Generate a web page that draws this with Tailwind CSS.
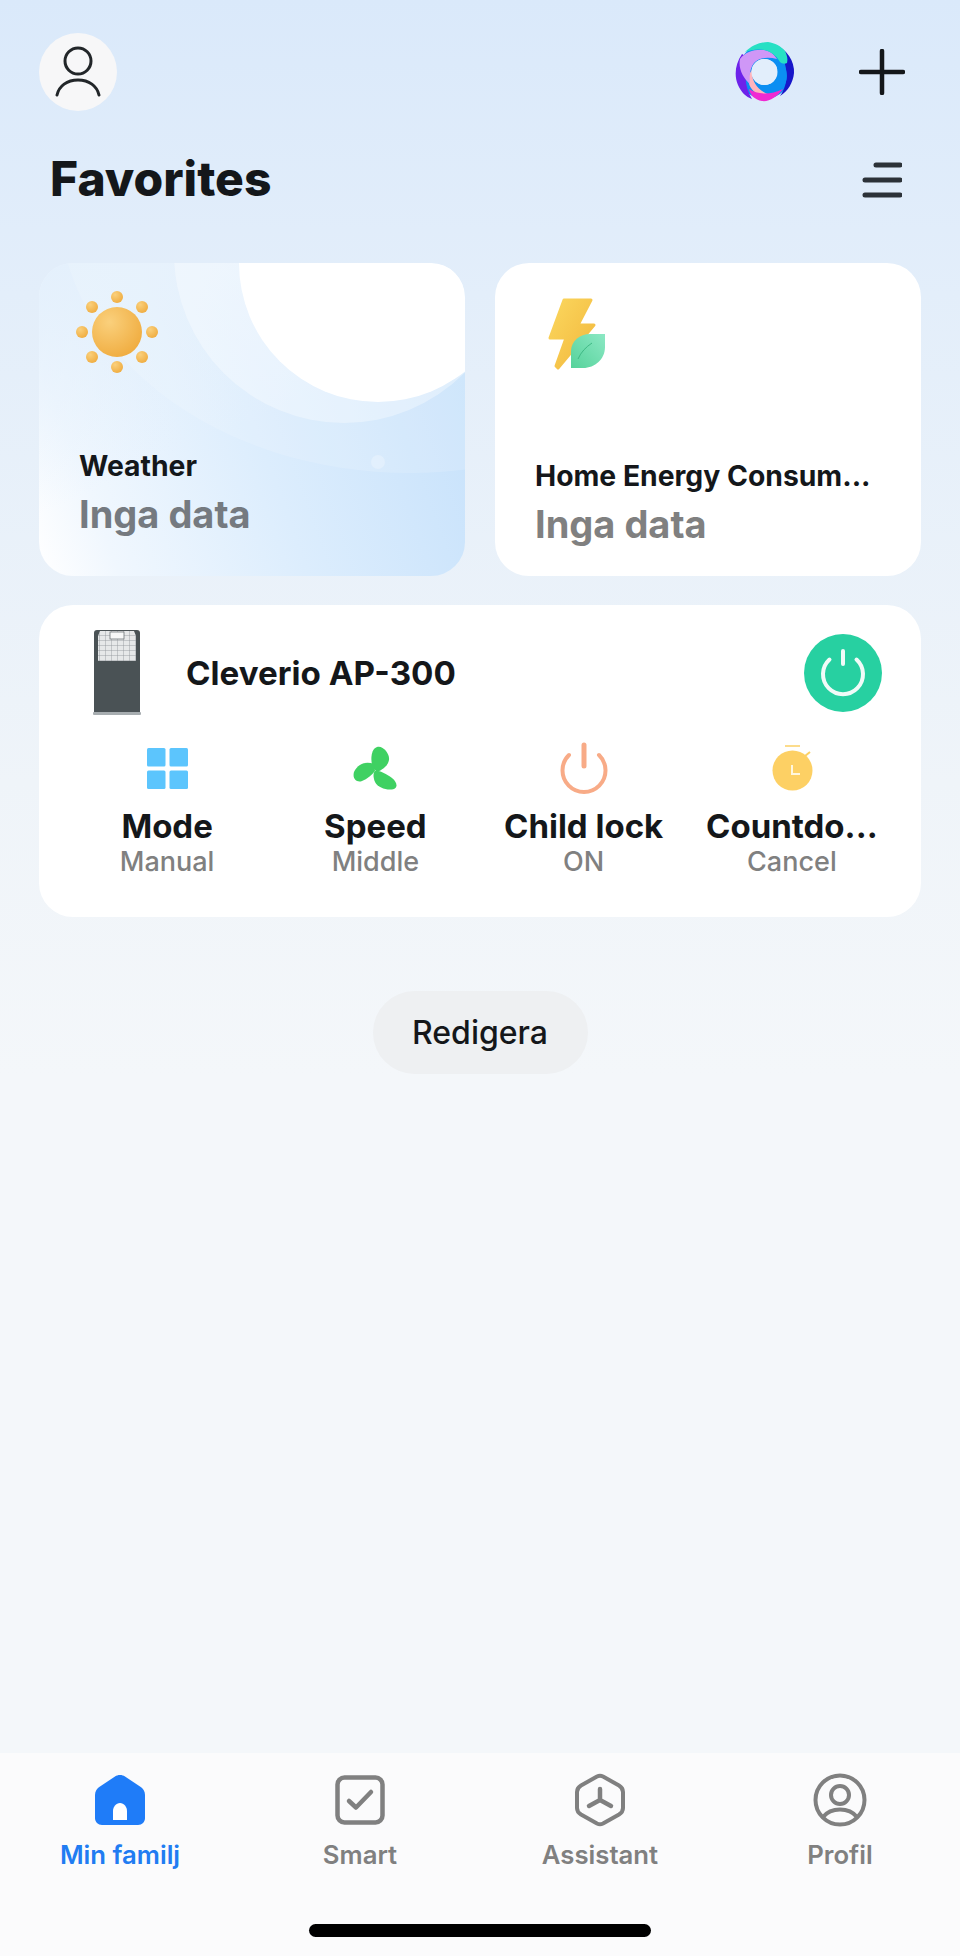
<!DOCTYPE html>
<html lang="sv">
<head>
    <meta charset="UTF-8">
    <meta name="viewport" content="width=device-width, initial-scale=1.0">
    <title>Favorites</title>
    <script src="https://cdn.jsdelivr.net/npm/@tailwindcss/browser@4"></script>
</head>
<body class="w-[960px] h-[1956px] overflow-hidden font-['Inter',sans-serif] text-[#14171a] bg-[linear-gradient(180deg,#dae9fa_0%,#e3eefa_15%,#eff4f9_40%,#f4f7fa_55%,#f4f7fa_100%)] flex flex-col">

    <main class="flex-1 px-[39px]">
        <!-- top bar -->
        <div class="flex items-center justify-between pt-[33px]">
            <div class="w-[78px] h-[78px] rounded-full bg-[#f7f7f8] flex items-center justify-center">
                <svg width="48" height="52" viewBox="0 0 48 52" fill="none" stroke="#222629" stroke-width="3" stroke-linecap="round">
                    <circle cx="24" cy="15" r="13"/>
                    <path d="M3 49C5 40 13 34 24 34C35 34 43 40 45 49"/>
                </svg>
            </div>
            <div class="flex items-center">
                <svg width="60" height="60" viewBox="0 0 60 60">
                    <circle cx="29.500" cy="30" r="20" fill="none" stroke="#0b8ef2" stroke-width="14"/>
                    <path d="M40 3A28.500 28.500 0 0 1 59 31C58 41 53 49 45 54C54 42 55 22 40 3Z" fill="#1716c9"/>
                    <path d="M45 18C56 28 55 50 34 52C28 52 23 49 20 45C30 47 42 42 42 30C42 26 43 22 45 18Z" fill="#0b8ef2"/>
                    <path d="M17 28C16 40 24 50 36 53C28 56 20 52 16 46C12 40 13 32 17 28Z" fill="#ffb4bd"/>
                    <path d="M14 47C22 52 34 54 48 47C42 55 34 60 27 59C20 58 15 53 14 47Z" fill="#f02ad2"/>
                    <path d="M7 12C0 22 -1 34 3 43C6 50 11 55 17 57C11 47 9 36 12 26C13 22 16 18 20 16C15 16 10 14 7 12Z" fill="#6d22ea"/>
                    <path d="M5 17C10 10 20 7 29 8C35 9 39 12 42 17C34 15 26 15 20 20C15 25 14 34 15 42C8 36 3 26 5 17Z" fill="#cf97f7"/>
                    <path d="M10 10C17 3 26 0 33 0C40 1 46 4 50 9C52 13 53 17 52 21C50 22 47 22 45 20C41 13 35 9 29 8C22 7 16 8 10 10Z" fill="#27e0c4"/>
                    <circle cx="29.500" cy="30" r="13" fill="#e2eefb"/>
                </svg>
                <svg class="ml-[64px] mr-[16px]" width="46" height="46" viewBox="0 0 46 46" stroke="#14171a" stroke-width="4.500" stroke-linecap="round">
                    <path d="M23 2V44M2 23H44"/>
                </svg>
            </div>
        </div>

        <!-- title -->
        <div class="flex items-center justify-between mt-[41px] pl-[11px] pr-[19px]">
            <h1 class="h-[56px] text-[48px] leading-[54px] font-extrabold">Favorites</h1>
            <svg width="40" height="36" viewBox="0 0 40 36" stroke="#2c3238" stroke-width="5" stroke-linecap="round">
                <path d="M14 3H38M3 18H38M3 33H38"/>
            </svg>
        </div>

        <!-- favorite cards -->
        <div class="grid grid-cols-2 gap-[30px] mt-[55px]">
            <div class="relative h-[313px] rounded-[34px] overflow-hidden bg-[linear-gradient(70deg,#ffffff_0%,#f0f7fe_15%,#dcedfd_50%,#c4e0fb_100%)]">
                <svg class="absolute inset-0" width="426" height="313" viewBox="0 0 426 313">
                    <defs>
                        <linearGradient id="topFade" x1="0" y1="0" x2="0.35" y2="0.6">
                            <stop offset="0" stop-color="#e4f0fc"/>
                            <stop offset="1" stop-color="#e4f0fc" stop-opacity="0"/>
                        </linearGradient>
                    </defs>
                    <rect width="426" height="313" fill="url(#topFade)"/>
                    <ellipse cx="370" cy="-60" rx="350" ry="270" fill="#ffffff" fill-opacity="0.14"/>
                    <circle cx="305" cy="-10" r="170" fill="#ffffff" fill-opacity="0.34"/>
                    <circle cx="339" cy="0" r="139" fill="#ffffff"/>
                    <circle cx="339" cy="199" r="7" fill="#ffffff" fill-opacity="0.25"/>
                </svg>
                <svg class="absolute left-[37px] top-[28px]" width="84" height="84" viewBox="0 0 84 84">
                    <defs>
                        <radialGradient id="sunBody" cx="0.35" cy="0.3" r="0.8">
                            <stop offset="0" stop-color="#fad07c"/>
                            <stop offset="1" stop-color="#efaa3c"/>
                        </radialGradient>
                    </defs>
                    <circle cx="41" cy="41" r="25" fill="url(#sunBody)"/>
                    <g fill="url(#sunBody)">
                        <circle cx="41" cy="6" r="6"/>
                        <circle cx="41" cy="76" r="6"/>
                        <circle cx="6" cy="41" r="6"/>
                        <circle cx="76" cy="41" r="6"/>
                        <circle cx="16" cy="16" r="6"/>
                        <circle cx="66" cy="16" r="6"/>
                        <circle cx="16" cy="66" r="6"/>
                        <circle cx="66" cy="66" r="6"/>
                    </g>
                </svg>
                <div class="absolute left-[40px] top-[185px]">
                    <div class="text-[28.300px] leading-[36px] font-bold">Weather</div>
                    <div class="text-[38px] leading-[48px] font-bold text-[#757a80] mt-[6px]">Inga data</div>
                </div>
            </div>

            <div class="h-[313px] rounded-[34px] bg-white px-[40px] pt-[34px] flex flex-col">
                <svg width="60" height="76" viewBox="0 0 60 76" class="ml-[13px]">
                    <defs>
                        <linearGradient id="bolt" x1="0" y1="0" x2="1" y2="1">
                            <stop offset="0" stop-color="#fbd75e"/>
                            <stop offset="1" stop-color="#f2b73c"/>
                        </linearGradient>
                        <linearGradient id="leaf" x1="0" y1="1" x2="1" y2="0">
                            <stop offset="0" stop-color="#55d29a"/>
                            <stop offset="1" stop-color="#8ce8c4"/>
                        </linearGradient>
                    </defs>
                    <path d="M16 3H43L30 28H46L10 71L8 69L18 41H2Z" fill="url(#bolt)" stroke="url(#bolt)" stroke-width="3" stroke-linejoin="round"/>
                    <path d="M23 71V54C23 44 32 37 42 37H57V50C57 62 47 71 35 71Z" fill="url(#leaf)"/>
                    <path d="M30 62C33 55 38 50 44 46" fill="none" stroke="#3fb985" stroke-width="1"/>
                </svg>
                <div class="text-[28.300px] leading-[36px] font-bold mt-[85px] whitespace-nowrap">Home Energy Consum...</div>
                <div class="text-[38px] leading-[48px] font-bold text-[#808080] mt-[6px]">Inga data</div>
            </div>
        </div>

        <!-- device card -->
        <div class="h-[312px] mt-[29px] rounded-[34px] bg-white">
            <div class="flex items-center justify-between pt-[25px] pl-[54px] pr-[39px]">
                <div class="flex items-center">
                    <svg width="48" height="86" viewBox="0 0 48 86">
                        <defs>
                            <pattern id="mesh" width="6" height="5" patternUnits="userSpaceOnUse">
                                <path d="M6 0H0V5" fill="none" stroke="#8d9295" stroke-width="0.800"/>
                            </pattern>
                        </defs>
                        <path d="M4 0H44C46 0 47 1 47 3V82H1V3C1 1 2 0 4 0Z" fill="#4a5255"/>
                        <path d="M7 1H41L43 6V31H5V6Z" fill="#e6e8e9"/>
                        <path d="M7 1H41L43 6V31H5V6Z" fill="url(#mesh)"/>
                        <rect x="17" y="2" width="14" height="7" fill="#f7f8f8" stroke="#6f7578" stroke-width="0.800"/>
                        <rect x="0" y="82" width="48" height="3" rx="1" fill="#a7adb0"/>
                    </svg>
                    <div class="text-[33.200px] leading-[44px] font-bold ml-[45px] whitespace-nowrap">Cleverio AP-300</div>
                </div>
                <div class="w-[78px] h-[78px] rounded-full bg-[#27d0a1] flex items-center justify-center">
                    <svg width="46" height="48" viewBox="0 0 46 48" fill="none" stroke="#f1fbf8" stroke-width="4" stroke-linecap="round">
                        <path d="M9.500 10.500A20 20 0 1 0 36.500 10.500"/>
                        <path d="M23 2V15"/>
                    </svg>
                </div>
            </div>
            <div class="grid grid-cols-4 mt-[25px] pl-[24px] pr-[25px]">
                <div class="flex flex-col items-center">
                    <div class="h-[54px] flex items-center">
                        <svg width="41" height="41" viewBox="0 0 41 41" fill="#5cc5fd">
                            <rect width="18.500" height="18.500" rx="1.500"/>
                            <rect x="22.500" width="18.500" height="18.500" rx="1.500"/>
                            <rect y="22.500" width="18.500" height="18.500" rx="1.500"/>
                            <rect x="22.500" y="22.500" width="18.500" height="18.500" rx="1.500"/>
                        </svg>
                    </div>
                    <div class="text-[33px] leading-[40px] font-bold mt-[11px]">Mode</div>
                    <div class="text-[27px] leading-[32px] font-medium text-[#808080]">Manual</div>
                </div>
                <div class="flex flex-col items-center">
                    <div class="h-[54px] flex items-center">
                        <svg width="45" height="44" viewBox="0 0 45 44" fill="#3fd162">
                            <path d="M20 22C17 14 18 3 24 1C30 -1 37 8 36 14C35 20 29 24 24 26Z"/>
                            <path d="M21 18C14 15 5 17 1 26C-1 33 4 37 9 35C14 33 19 29 22 25Z"/>
                            <path d="M22 25C26 24 33 28 39 32C44 36 45 41 41 43C35 45 25 42 22 36C20 31 20 27 22 25Z"/>
                        </svg>
                    </div>
                    <div class="text-[33px] leading-[40px] font-bold mt-[11px]">Speed</div>
                    <div class="text-[27px] leading-[32px] font-medium text-[#808080]">Middle</div>
                </div>
                <div class="flex flex-col items-center">
                    <div class="h-[54px] flex items-center">
                        <svg width="48" height="52" viewBox="0 0 48 52" fill="none" stroke="#f8ab87" stroke-width="4" stroke-linecap="round">
                            <path d="M9 13A21.500 21.500 0 1 0 39 13"/>
                            <path d="M24 3V24" stroke-width="5"/>
                        </svg>
                    </div>
                    <div class="text-[33px] leading-[40px] font-bold mt-[11px] whitespace-nowrap">Child lock</div>
                    <div class="text-[27px] leading-[32px] font-medium text-[#808080]">ON</div>
                </div>
                <div class="flex flex-col items-center">
                    <div class="h-[54px] flex items-center">
                        <svg width="42" height="46" viewBox="-1 0 42 46" fill="none">
                            <path d="M13 1H28" stroke="#fbd066" stroke-width="1.500"/>
                            <path d="M33 11L38 7" stroke="#fbd066" stroke-width="2"/>
                            <circle cx="20.500" cy="25.500" r="20" fill="#fdd064"/>
                            <path d="M20 20V29H28" stroke="#fff6dd" stroke-width="2"/>
                        </svg>
                    </div>
                    <div class="text-[33px] leading-[40px] font-bold mt-[11px] whitespace-nowrap">Countdo...</div>
                    <div class="text-[27px] leading-[32px] font-medium text-[#808080]">Cancel</div>
                </div>
            </div>
        </div>

        <!-- edit -->
        <div class="flex justify-center mt-[74px]">
            <button class="w-[215px] h-[83px] rounded-full bg-[#eef0f2] text-[32px] font-medium">Redigera</button>
        </div>
    </main>

    <!-- tab bar -->
    <nav class="relative h-[203px] bg-[#fbfbfc]">
        <div class="grid grid-cols-4 pt-[20px]">
            <div class="flex flex-col items-center">
                <div class="h-[54px] flex items-center">
                    <svg width="50" height="50" viewBox="0 0 50 50">
                        <path d="M25 0C27 0 28.500 .5 30 1.500L45 11.500C48 13.500 50 16 50 20V43C50 47 47 50 43 50H7C3 50 0 47 0 43V20C0 16 2 13.500 5 11.500L20 1.500C21.500 .5 23 0 25 0Z" fill="#1f7cf8"/>
                        <path d="M18 45V36C18 32 21 28 25 28C29 28 32 32 32 36V45Z" fill="#ffffff"/>
                    </svg>
                </div>
                <div class="text-[25.700px] leading-[32px] font-semibold text-[#217cf2] mt-[12px]">Min familj</div>
            </div>
            <div class="flex flex-col items-center">
                <div class="h-[54px] flex items-center">
                    <svg width="50" height="50" viewBox="0 0 50 50" fill="none" stroke="#808080" stroke-linecap="round" stroke-linejoin="round">
                        <rect x="2.500" y="2.500" width="45" height="45" rx="7" stroke-width="4.500"/>
                        <path d="M14 26L21 32.500L36 17" stroke-width="4.500"/>
                    </svg>
                </div>
                <div class="text-[25.700px] leading-[32px] font-semibold text-[#808080] mt-[12px]">Smart</div>
            </div>
            <div class="flex flex-col items-center">
                <div class="h-[54px] flex items-center">
                    <svg width="50" height="54" viewBox="0 0 50 54" fill="none" stroke="#808080" stroke-width="4" stroke-linecap="round" stroke-linejoin="round">
                        <path d="M22 3.500C24 2.500 26 2.500 28 3.500L44 12.500C46.500 14 48 16 48 19V35C48 38 46.500 40 44 41.500L28 50.500C26 51.500 24 51.500 22 50.500L6 41.500C3.500 40 2 38 2 35V19C2 16 3.500 14 6 12.500Z"/>
                        <path d="M25 16V27M25 27L14 33M25 27L36 33" stroke-width="4.500"/>
                    </svg>
                </div>
                <div class="text-[25.700px] leading-[32px] font-semibold text-[#808080] mt-[12px]">Assistant</div>
            </div>
            <div class="flex flex-col items-center">
                <div class="h-[54px] flex items-center">
                    <svg width="54" height="54" viewBox="0 0 54 54" fill="none" stroke="#808080" stroke-width="4">
                        <circle cx="27" cy="27" r="24.500"/>
                        <circle cx="27" cy="22" r="9"/>
                        <path d="M10 44C14 39 20 36.500 27 36.500C34 36.500 40 39 44 44"/>
                    </svg>
                </div>
                <div class="text-[25.700px] leading-[32px] font-semibold text-[#808080] mt-[12px]">Profil</div>
            </div>
        </div>
        <div class="absolute left-[309px] top-[171px] w-[342px] h-[13px] rounded-full bg-black"></div>
    </nav>
</body>
</html>
